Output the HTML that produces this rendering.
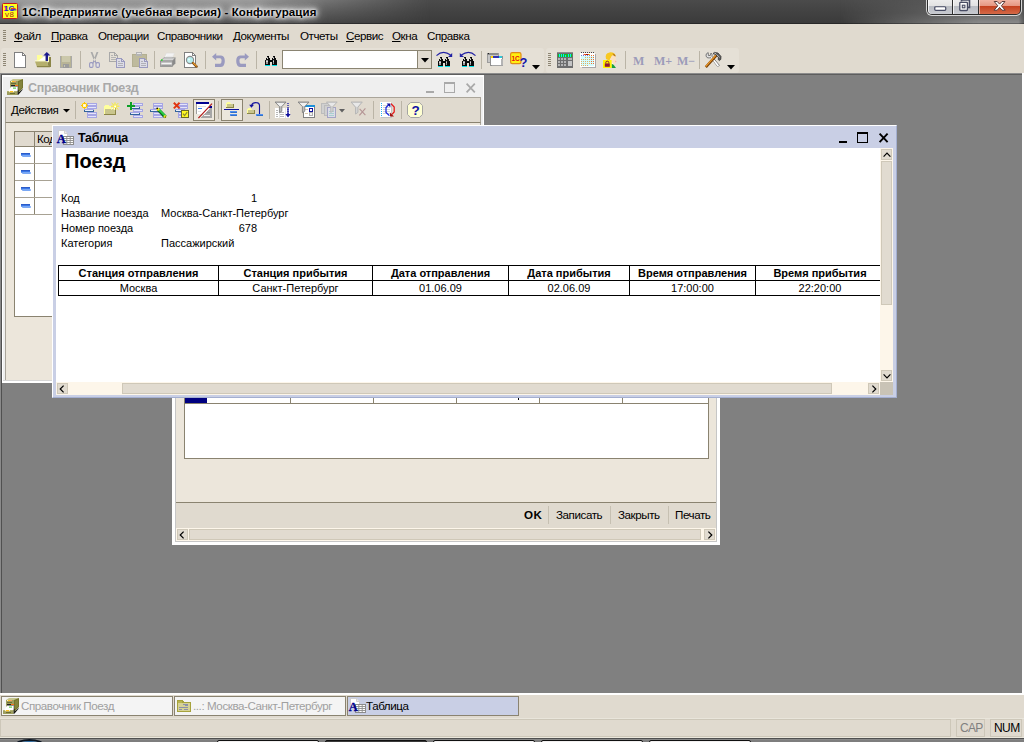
<!DOCTYPE html>
<html lang="ru">
<head>
<meta charset="utf-8">
<title>1С:Предприятие (учебная версия) - Конфигурация</title>
<style>
*{box-sizing:border-box;margin:0;padding:0}
html,body{width:1024px;height:742px;overflow:hidden;background:#808080}
body{position:relative;font-family:"Liberation Sans",sans-serif;font-size:11px;color:#000;line-height:13px}
.a{position:absolute}
.t{position:absolute;white-space:nowrap;font-family:"Liberation Sans",sans-serif;font-size:11px;line-height:13px}
.b{font-weight:bold}
.u{font-size:11.6px;letter-spacing:-.42px}
svg{position:absolute;overflow:visible}
.sep{position:absolute;width:1px;background:#bab4a6}
.grip{position:absolute;width:3px;height:14px;background:repeating-linear-gradient(to bottom,#8d8573 0,#8d8573 1px,transparent 1px,transparent 2px)}
/* title bar */
#titlebar{left:0;top:0;width:1024px;height:24px;background:linear-gradient(to bottom,#4b4b4b 0,#424242 50%,#3a3a3a 100%)}
#tbl{left:0;top:0;width:430px;height:24px;background:linear-gradient(to bottom,#9c9c9c 0,#7c7c7c 40%,#5e5e5e 80%,#4c4c4c 100%);-webkit-mask-image:linear-gradient(to right,#000 0,#000 58%,rgba(0,0,0,.5) 76%,transparent 100%);mask-image:linear-gradient(to right,#000 0,#000 58%,rgba(0,0,0,.5) 76%,transparent 100%)}
#tbr{left:840px;top:0;width:184px;height:24px;background:linear-gradient(to bottom,#5c5c5c 0,#6a6a6a 55%,#8c8c8c 100%);-webkit-mask-image:linear-gradient(to right,transparent 0,rgba(0,0,0,.6) 45%,#000 75%,#000 97%,rgba(0,0,0,.4) 100%);mask-image:linear-gradient(to right,transparent 0,rgba(0,0,0,.6) 45%,#000 75%,#000 97%,rgba(0,0,0,.4) 100%)}
#titletext{left:22px;top:5px;font-weight:bold;font-size:11.5px;line-height:14px;letter-spacing:.12px;text-shadow:0 0 3px #fff,0 0 5px #fff,0 0 7px rgba(255,255,255,.9),0 0 10px rgba(255,255,255,.8),0 0 14px rgba(255,255,255,.5)}
#menubar{left:0;top:24px;width:1024px;height:24px;background:#e0dacf}
#toolbar{left:0;top:48px;width:1024px;height:25px;background:#e0dacf}
.tbband{position:absolute;top:48px;height:25px;background:#e5e0d6;border-radius:3px}
.mi{top:29px}
/* windows */
.win{position:absolute;background:#ece6db}
.sbtrack{position:absolute;background:#fdf6ea}
.sbbtn{position:absolute;width:11px;height:11px;background:#e1dbd0;border:1px solid #cfc8b8}
.sbthumb{position:absolute;background:#e1dbd0;border:1px solid #cfc8b8}
</style>
</head>
<body>
<div class="a" style="left:0;top:74px;width:1024px;height:620px;background:#808080"></div>
<!-- title bar -->
<div id="titlebar" class="a"></div>
<div id="tbl" class="a"></div>
<div id="tbr" class="a"></div>
<div class="a" style="left:0;top:23px;width:1024px;height:1px;background:rgba(0,0,0,.3)"></div>
<svg style="left:2px;top:3px" width="16" height="16" viewBox="0 0 16 16">
 <rect x="0.5" y="0.5" width="15" height="15" rx="1" fill="#ffff1c" stroke="#c4181c"/>
 <text x="1.6" y="8" font-family="'Liberation Sans',sans-serif" font-weight="bold" font-size="7.5" fill="#f01010">1</text>
 <text x="2.2" y="8" font-family="'Liberation Sans',sans-serif" font-weight="bold" font-size="7.5" fill="#1c1ce8">1</text>
 <text x="6.4" y="8" font-family="'Liberation Sans',sans-serif" font-weight="bold" font-size="8" fill="#1c1ce8">C</text>
 <rect x="9" y="5.2" width="4.6" height="1.1" fill="#f01010"/>
 <rect x="9" y="6.3" width="5.4" height="1.1" fill="#1c1ce8"/>
 <text x="3" y="14.4" font-family="'Liberation Sans',sans-serif" font-size="8" fill="#b01c1c" letter-spacing=".6">v8</text>
</svg>
<div id="titletext" class="t">1С:Предприятие (учебная версия) - Конфигурация</div>
<!-- caption buttons -->
<div class="a" style="left:926px;top:-3px;width:96px;height:19px;border:1px solid rgba(255,255,255,.8);border-radius:0 0 6px 6px;background:#2d2d2d"></div>
<div class="a" style="left:928px;top:0;width:24px;height:14px;border-radius:0 0 0 4px;background:linear-gradient(to bottom,#ececec 0,#e2e2e2 43%,#b9bcc2 44%,#c8cad0 100%);box-shadow:inset 1px 0 0 rgba(255,255,255,.7)"></div>
<div class="a" style="left:953px;top:0;width:25px;height:14px;background:linear-gradient(to bottom,#ececec 0,#e2e2e2 43%,#b9bcc2 44%,#c8cad0 100%);box-shadow:inset 1px 0 0 rgba(255,255,255,.7)"></div>
<div class="a" style="left:979px;top:0;width:41px;height:14px;border-radius:0 0 4px 0;background:linear-gradient(to bottom,#f0b4a4 0,#e59682 43%,#c4401f 44%,#d46a48 100%);box-shadow:inset 1px 0 0 rgba(255,255,255,.5)"></div>
<svg style="left:934px;top:6px" width="13" height="6" viewBox="0 0 13 6"><rect x="0.75" y="0.75" width="11" height="3.6" rx="1" fill="#fff" stroke="#474b63" stroke-width="1.2"/></svg>
<svg style="left:958px;top:0" width="14" height="12" viewBox="0 0 14 12">
 <path d="M3.5 1.5 V0 H11.5 V7.5 H9.5" fill="none" stroke="#474b63" stroke-width="1.6"/>
 <rect x="1.8" y="2.3" width="7.6" height="8.2" rx="0.8" fill="#fff" stroke="#474b63" stroke-width="1.3"/>
 <rect x="4.3" y="5.2" width="2.6" height="2.6" fill="#e0e0e0" stroke="#474b63" stroke-width="1.1"/>
</svg>
<svg style="left:993px;top:0" width="14" height="12" viewBox="0 0 14 12">
 <path d="M1.2 1.5 L4.2 1.5 L6.6 4.1 L9 1.5 L12 1.5 L8.4 5.8 L12.2 10.2 L9 10.2 L6.6 7.4 L4.2 10.2 L1 10.2 L4.8 5.8 Z" fill="#fff" stroke="#5a3a3a" stroke-width="1" stroke-linejoin="round"/>
</svg>
<!-- menu bar -->
<div id="menubar" class="a"></div>
<div class="grip" style="left:3px;top:30px;height:12px"></div>
<div class="t mi u" style="left:14px"><u>Ф</u>айл</div>
<div class="t mi u" style="left:51px"><u>П</u>равка</div>
<div class="t mi u" style="left:98px">Операции</div>
<div class="t mi u" style="left:157px">Справочники</div>
<div class="t mi u" style="left:233px">Документы</div>
<div class="t mi u" style="left:300px">Отчеты</div>
<div class="t mi u" style="left:346px"><u>С</u>ервис</div>
<div class="t mi u" style="left:392px"><u>О</u>кна</div>
<div class="t mi u" style="left:427px">Сп<u>р</u>авка</div>
<!-- toolbar -->
<div id="toolbar" class="a"></div>
<div class="tbband" style="left:1px;width:543px"></div>
<div class="tbband" style="left:546px;width:193px"></div>
<div class="a" style="left:0;top:73px;width:1024px;height:1px;background:#8c8c8c"></div>
<div class="a" style="left:0;top:74px;width:1024px;height:1px;background:#5e5e5e"></div>
<div class="grip" style="left:3px;top:53px"></div>
<div class="grip" style="left:548px;top:53px"></div>
<div class="sep" style="left:80px;top:51px;height:18px"></div>
<div class="sep" style="left:154px;top:51px;height:18px"></div>
<div class="sep" style="left:205px;top:51px;height:18px"></div>
<div class="sep" style="left:256px;top:51px;height:18px"></div>
<div class="sep" style="left:481px;top:51px;height:18px"></div>
<div class="sep" style="left:625px;top:51px;height:18px"></div>
<div class="sep" style="left:699px;top:51px;height:18px"></div>
<!-- combo -->
<div class="a" style="left:282px;top:50px;width:150px;height:19px;background:#fff;border:1px solid #8a8472"></div>
<div class="a" style="left:417px;top:51px;width:14px;height:17px;background:#e1dbd0;border-left:1px solid #8a8472"></div>
<svg style="left:421px;top:58px" width="8" height="5" viewBox="0 0 8 5"><path d="M0 0H8L4 4.5Z" fill="#000"/></svg>
<svg style="left:532px;top:65px" width="8" height="5" viewBox="0 0 8 5"><path d="M0 0H8L4 4.5Z" fill="#000"/></svg>
<svg style="left:727px;top:65px" width="8" height="5" viewBox="0 0 8 5"><path d="M0 0H8L4 4.5Z" fill="#000"/></svg>
<!-- M buttons -->
<div class="t b" style="left:633px;top:54px;font-family:'Liberation Serif',serif;font-size:12px;line-height:14px;color:#9b9bb9">M</div>
<div class="t b" style="left:654px;top:54px;font-family:'Liberation Serif',serif;font-size:12px;line-height:14px;color:#9b9bb9">M+</div>
<div class="t b" style="left:677px;top:54px;font-family:'Liberation Serif',serif;font-size:12px;line-height:14px;color:#9b9bb9">M−</div>
<!-- main toolbar icons -->
<svg style="left:14px;top:52px" width="12" height="16" viewBox="0 0 12 16" shape-rendering="crispEdges">
 <path d="M0.5 0.5H8.5L11.5 3.5V15.5H0.5Z" fill="#fff" stroke="#808080"/>
 <path d="M8.5 0.5V3.5H11.5" fill="none" stroke="#808080"/>
</svg>
<svg style="left:35px;top:52px" width="16" height="16" viewBox="0 0 16 16">
 <path d="M2 3H6.6L7.6 4.4V9H2Z" fill="#ffff99"/>
 <path d="M3 9L9 4.4L10.6 5.4V9Z" fill="#fff"/>
 <path d="M13 5H14.4V12H13Z" fill="#ffffc0"/>
 <path d="M0 8.4H11.6V9.6H0Z" fill="#ffffc8"/>
 <path d="M0 9.4H12L13.6 15H2Z" fill="#b5af6c"/>
 <path d="M14 5H16V15H13.6L12.4 10.6L14 10Z" fill="#8b8547"/>
 <path d="M1.8 14H15V15.2H2.2Z" fill="#8b8547"/>
 <path d="M10.6 3H13V9H10.6Z" fill="#1a1a8c"/>
 <path d="M8.4 3.6L11.8 0L15.4 3.6Z" fill="#1a1a8c"/>
</svg>
<svg style="left:60px;top:56px" width="12" height="12" viewBox="0 0 12 12" shape-rendering="crispEdges">
 <rect x="0" y="0" width="12" height="12" fill="#a9a9a9"/>
 <rect x="1" y="0" width="10" height="11" fill="#b8b496"/>
 <rect x="2" y="0" width="8" height="6" fill="#cbc8ab"/>
 <rect x="3" y="8" width="6" height="4" fill="#9c9c9c"/>
 <rect x="4" y="9" width="1" height="2" fill="#c8c5b0"/>
</svg>
<svg style="left:89px;top:52px" width="11" height="16" viewBox="0 0 11 16">
 <path d="M1.6 0L3.4 0L7 9.6L5.6 10.2Z M9.4 0L7.6 0L4 9.6L5.4 10.2Z" fill="#a9a9a9"/>
 <rect x="0.6" y="10.6" width="3.4" height="4.8" rx="1.2" fill="#e4e1e2" stroke="#9a9abf" stroke-width="1.1"/>
 <rect x="7" y="10.6" width="3.4" height="4.8" rx="1.2" fill="#e4e1e2" stroke="#9a9abf" stroke-width="1.1"/>
 <path d="M3.8 11.4L5 8.8M7.2 11.4L6 8.8" stroke="#9a9abf" stroke-width="1.1"/>
</svg>
<svg style="left:109px;top:52px" width="16" height="16" viewBox="0 0 16 16" shape-rendering="crispEdges">
 <path d="M0.5 0.5H5.5L8.5 3.5V9.5H0.5Z" fill="#e5e0d6" stroke="#a9a9a9"/>
 <path d="M5.5 0.5V3.5H8.5" fill="none" stroke="#a9a9a9"/>
 <path d="M2 3.5H4M2 5.5H7M2 7.5H7" stroke="#b4b4b4"/>
 <path d="M7.5 6.5H12.5L15.5 9.5V15.5H7.5Z" fill="#dcdce6" stroke="#9a9abf"/>
 <path d="M12.5 6.5V9.5H15.5" fill="none" stroke="#9a9abf"/>
 <path d="M9 9.5H11M9 11.5H14M9 13.5H14" stroke="#b0b0b8"/>
</svg>
<svg style="left:132px;top:52px" width="16" height="16" viewBox="0 0 16 16" shape-rendering="crispEdges">
 <rect x="0" y="2" width="14" height="12" rx="1" fill="#beba9d"/>
 <rect x="0" y="2" width="14" height="12" fill="none" stroke="#b3af92" stroke-width="1"/>
 <rect x="4" y="0" width="6" height="4" fill="#b4b4b4"/>
 <rect x="5" y="1" width="4" height="1" fill="#e6e6e6"/>
 <path d="M7.5 6.5H12.5L15.5 9.5V15.5H7.5Z" fill="#dcdce6" stroke="#9a9abf"/>
 <path d="M12.5 6.5V9.5H15.5" fill="none" stroke="#9a9abf"/>
 <path d="M9 9.5H11M9 11.5H14M9 13.5H14" stroke="#b0b0b8"/>
</svg>
<svg style="left:160px;top:52px" width="16" height="16" viewBox="0 0 16 16">
 <path d="M4 6.4L6.4 1.2H14.4L12 6.4Z" fill="#fff" stroke="#dadada" stroke-width=".6"/>
 <path d="M6.4 3H13.2M5.6 4.6H12.4" stroke="#e0e0e0" stroke-width=".8"/>
 <path d="M0.6 9L3.8 5.8H15.4L12.4 9Z" fill="#d4d4d4" stroke="#8c8c8c" stroke-width=".7"/>
 <path d="M12.4 9L15.4 5.8V11.4L12.4 14.6Z" fill="#8a8a8a"/>
 <rect x="0.6" y="9" width="11.8" height="5.6" fill="#b8b8b8" stroke="#868686" stroke-width=".7"/>
 <rect x="1.4" y="10.8" width="10.2" height="1.6" fill="#f2f2f2"/>
 <rect x="1.4" y="12.8" width="10.2" height="1.2" fill="#9a9a9a"/>
 <rect x="1" y="7.4" width="1.6" height="1.4" fill="#20d820"/>
</svg>
<svg style="left:184px;top:52px" width="14" height="16" viewBox="0 0 14 16">
 <path d="M0.5 0.5H8.5L11.5 3.5V15.5H0.5Z" fill="#fff" stroke="#808080" shape-rendering="crispEdges"/>
 <path d="M8.5 0.5V3.5H11.5" fill="none" stroke="#808080" shape-rendering="crispEdges"/>
 <circle cx="6" cy="8" r="3.6" fill="#b4ecec" stroke="#8c8c8c" stroke-width="1.1"/>
 <path d="M5 6.2V9.8M4 7.4H6.2" stroke="#e8ffff" stroke-width=".9"/>
 <path d="M9 11L12.6 14.6" stroke="#7a4a10" stroke-width="2.4" stroke-linecap="round"/>
 <path d="M9.2 10.8L12.4 14" stroke="#e89a30" stroke-width="1.1" stroke-linecap="round"/>
</svg>
<svg style="left:212px;top:53px" width="13" height="14" viewBox="0 0 13 14">
 <path d="M4.2 0L0 3.8L4.2 7.6V5.2H8.2Q9.6 5.4 9.6 7.6Q9.6 10.4 8.2 10.8H3V14H9Q12.8 13.6 12.8 8Q12.8 2.6 9 2.4H4.2Z" fill="#9a9abf"/>
</svg>
<svg style="left:236px;top:53px" width="13" height="14" viewBox="0 0 13 14">
 <path d="M8.8 0L13 3.8L8.8 7.6V5.2H4.8Q3.4 5.4 3.4 7.6Q3.4 10.4 4.8 10.8H10V14H4Q0.2 13.6 0.2 8Q0.2 2.6 4 2.4H8.8Z" fill="#9a9abf"/>
</svg>
<svg width="0" height="0" style="left:0;top:0"><defs>
 <g id="bino">
  <path d="M2 0H4.2V2H5V4H7V2H7.8V0H10V2H11V4H12V10H7.4V6H4.6V10H0V4H1V2H2Z" fill="#0a0a0a"/>
  <path d="M2 1H3V3H2ZM1 4H3V8H1ZM7.8 1H8.8V3H7.8ZM7.6 4H9.2V8H7.6Z" fill="#9a9a9a"/>
  <path d="M2 2H3V3H2ZM8 2H9V3H8ZM1.4 5H2.6V6H1.4ZM8 5H9V6H8Z" fill="#d8d8d8"/>
  <path d="M0 9H4.6V10H0ZM7.4 9H12V10H7.4Z" fill="#00e0e8"/>
 </g></defs></svg>
<svg style="left:265px;top:56px" width="12" height="10" viewBox="0 0 12 10" shape-rendering="crispEdges"><use href="#bino"/></svg>
<svg style="left:438px;top:57px" width="12" height="10" viewBox="0 0 12 10" shape-rendering="crispEdges"><use href="#bino"/></svg>
<svg style="left:462px;top:57px" width="12" height="10" viewBox="0 0 12 10" shape-rendering="crispEdges"><use href="#bino"/></svg>
<svg style="left:436px;top:51px" width="17" height="7" viewBox="0 0 17 7"><path d="M0.5 4.6Q7 -1.6 14.6 4" fill="none" stroke="#2222a4" stroke-width="1.2"/><path d="M16.2 2V6H12Z" fill="#2222a4"/></svg>
<svg style="left:459px;top:51px" width="17" height="7" viewBox="0 0 17 7"><path d="M16.5 4.6Q10 -1.6 2.4 4" fill="none" stroke="#2222a4" stroke-width="1.2"/><path d="M0.8 2V6H5Z" fill="#2222a4"/></svg>
<svg style="left:487px;top:53px" width="17" height="14" viewBox="0 0 17 14" shape-rendering="crispEdges">
 <rect x="0" y="0" width="11" height="9" fill="#c6c6c6" stroke="#9c9c9c"/>
 <rect x="0" y="0" width="11" height="2" fill="#8c8c8c"/>
 <rect x="1" y="0" width="1" height="1" fill="#222"/>
 <rect x="3.5" y="3.5" width="12" height="9" fill="#fff" stroke="#909090"/>
 <rect x="4" y="3" width="11" height="2" fill="#3434b4"/>
 <rect x="4" y="3" width="2" height="2" fill="#ffd800"/>
 <rect x="12" y="3" width="3" height="2" fill="#30c8d8"/>
 <rect x="14" y="6" width="2" height="7" fill="#b4b4b4"/>
 <rect x="5" y="12" width="11" height="1" fill="#a4a4a4"/>
</svg>
<svg style="left:510px;top:52px" width="17" height="16" viewBox="0 0 17 16">
 <rect x="0.6" y="0.6" width="10.4" height="11" rx="1.6" fill="#fff010" stroke="#e08a18" stroke-width="1.2"/>
 <text x="1.6" y="8.6" font-family="Liberation Sans,sans-serif" font-weight="bold" font-size="6.5" fill="#e81010" letter-spacing="-.3">1C</text>
 <text x="9.6" y="14.8" font-family="Liberation Sans,sans-serif" font-weight="bold" font-size="13" fill="#1414a8">?</text>
</svg>
<svg style="left:557px;top:52px" width="16" height="16" viewBox="0 0 16 16" shape-rendering="crispEdges">
 <rect x="0" y="0" width="16" height="16" fill="#6e6e6e"/>
 <rect x="0" y="0" width="16" height="1" fill="#8e8e8e"/>
 <rect x="1" y="2" width="14" height="3" fill="#10c020"/>
 <path d="M2 2V5M4 2V5M6 2V5M8 3V5M11 2V5M13 2V5" stroke="#10e8f0"/>
 <path d="M1 6H3V8H1ZM4 6H6V8H4ZM7 6H9V8H7ZM1 9H3V11H1ZM4 9H6V11H4ZM7 9H9V11H7ZM1 12H3V14H1ZM4 12H6V14H4ZM7 12H9V14H7Z" fill="#b4b4b4"/>
 <rect x="11" y="6" width="4" height="2" fill="#b4b4b4"/>
 <rect x="11" y="9" width="4" height="5" fill="#c4c4c4"/>
</svg>
<svg style="left:580px;top:52px" width="16" height="16" viewBox="0 0 16 16" shape-rendering="crispEdges">
 <rect x="2" y="2" width="14" height="14" fill="#a8a8a8"/>
 <rect x="0" y="1" width="15" height="14" fill="#fff"/>
 <rect x="1" y="4" width="13" height="10" fill="#d4fcfc"/>
 <path d="M1 0H2V1H1ZM3 0H4V1H3ZM5 0H6V1H5ZM7 0H8V1H7ZM9 0H10V1H9ZM11 0H12V1H11ZM13 0H14V1H13Z" fill="#444"/>
 <rect x="4" y="2" width="6" height="1" fill="#f06010"/>
 <rect x="6" y="2" width="2" height="1" fill="#a01010"/>
 <rect x="3" y="2" width="1" height="1" fill="#f090d0"/>
 <rect x="9" y="2" width="1" height="1" fill="#f0d020"/>
 <path d="M1 3H2V4H1ZM3 3H4V4H3ZM5 3H6V4H5ZM7 3H8V4H7ZM9 3H10V4H9Z" fill="#7080d0"/>
 <path d="M5 5H6V6H5ZM7 5H8V6H7ZM9 5H10V6H9ZM1 7H2V8H1ZM3 7H4V8H3ZM5 7H6V8H5ZM7 7H8V8H7ZM9 7H10V8H9ZM1 9H2V10H1ZM3 9H4V10H3ZM5 9H6V10H5ZM7 9H8V10H7ZM9 9H10V10H9ZM1 11H2V12H1ZM3 11H4V12H3ZM5 11H6V12H5ZM7 11H8V12H7ZM9 11H10V12H9ZM1 13H2V14H1ZM3 13H4V14H3ZM5 13H6V14H5ZM7 13H8V14H7Z" fill="#e0b060"/>
 <path d="M11 3H12V4H11ZM13 3H14V4H13ZM11 5H12V6H11ZM13 5H14V6H13ZM11 7H12V8H11ZM13 7H14V8H13ZM11 9H12V10H11ZM13 9H14V10H13ZM11 11H12V12H11ZM13 11H14V12H13Z" fill="#f07030"/>
</svg>
<svg style="left:603px;top:52px" width="14" height="16" viewBox="0 0 14 16">
 <path d="M3 7Q1.5 1 6.5 0.4Q12 0 12.6 4L9 4L6.4 8.4Z" fill="#f8c820"/>
 <path d="M6.4 8.4L9 3.6Q11 2.6 12.6 4.2L13 8L13.4 9.4L12.6 10L12.4 12L9 12.4Z" fill="#fbe0c0"/>
 <path d="M9.4 1.4Q12 1.4 12.8 4.4L11 4Z" fill="#b87820"/>
 <path d="M12 8.6L13.6 9.4L12.6 10.4Z" fill="#f0a0a0"/>
 <path d="M8.6 11.4L10.4 12.6L13 16H8.6Z" fill="#18a040"/>
 <path d="M8.6 11.4L9.8 10.4L10.6 12.8Z" fill="#f4f4f4"/>
 <rect x="0" y="8" width="8.6" height="8" fill="#fff400"/>
 <path d="M2.8 11.4V10.4Q2.8 9.2 4.3 9.2Q5.8 9.2 5.8 10.4V11.4" fill="none" stroke="#901838" stroke-width="1"/>
 <rect x="1.8" y="11.4" width="5" height="3.4" fill="#901838"/>
</svg>
<svg style="left:705px;top:52px" width="17" height="16" viewBox="0 0 17 16">
 <path d="M3.2 0.6Q0.6 1.4 1 4Q1.6 6.2 4.2 6L5.4 5.4L12.6 14.4L14.4 13.4L7 4.4Q7.6 2.4 6 1L5.4 3.4L3.4 3.6Z" fill="#e4e4e4" stroke="#6c6c6c" stroke-width=".9"/>
 <path d="M6.4 5.6L13.4 14" stroke="#fff" stroke-width="1.4"/>
 <path d="M0.8 15.2L11.6 3.2" stroke="#7a4208" stroke-width="2.6"/>
 <path d="M0.6 14.6L11.2 2.8" stroke="#f09a28" stroke-width="1.2"/>
 <path d="M8 1.6L9.4 0.4L13 1L16 4.4L15.8 7.4L14.4 8.6L13.2 7.6L13.4 5.6L10.6 2.6Z" fill="#5c5c5c" stroke="#2c2c2c" stroke-width=".7"/>
 <path d="M11.4 2.4L14.6 5.4M9.4 1.2L11 1.6" stroke="#c8c8c8" stroke-width=".9"/>
</svg>
<!-- MDI client sunken edge -->
<div class="a" style="left:0;top:74px;width:2px;height:620px;background:linear-gradient(to right,#8a8a8a 0,#8a8a8a 1px,#505050 1px,#505050 2px)"></div>
<div class="a" style="left:1022px;top:73px;width:2px;height:622px;background:#fff"></div>
<!-- Справочник Поезд window -->
<div class="a" style="left:2px;top:75px;width:482px;height:308px;background:#efefef;border:1px solid #fff;border-top-width:2px;border-bottom-width:2px"></div>
<div class="a" style="left:5px;top:97px;width:476px;height:284px;background:#ece6db;border-left:1px solid #aaa59a;border-right:1px solid #aaa59a"></div>
<div class="a" style="left:3px;top:380px;width:480px;height:1px;background:#d6d6d6"></div>
<div class="a" style="left:5px;top:97px;width:476px;height:26px;background:#e0dacf;border:1px solid #aaa59a;border-bottom-color:#8a8370"></div>
<!-- title -->
<svg width="0" height="0" style="left:0;top:0"><defs><g id="cab">
 <path d="M3 2L6 0H16V2Z" fill="#c6c68e"/>
 <path d="M11 2L16 0V9L11 14Z" fill="#74742e"/>
 <path d="M12 3L15 1.6V8.6L12 11.6Z" fill="#84843c"/>
 <rect x="3" y="2" width="8" height="10" fill="#9e9e5e"/>
 <rect x="4" y="2" width="5" height="1" fill="#fff4c0"/><rect x="5" y="2" width="2" height="1" fill="#ffc020"/><rect x="7" y="2" width="2" height="1" fill="#f8a060"/>
 <rect x="4" y="4" width="5" height="1" fill="#6c6c30"/>
 <rect x="4" y="6" width="7" height="2" fill="#20201c"/>
 <rect x="8" y="6" width="3" height="1" fill="#ff7010"/>
 <path d="M1.4 12L4 7.6H11V12Z" fill="#fff"/>
 <path d="M10 8H11V12H10Z" fill="#c0c0d0"/>
 <rect x="6" y="8.6" width="3" height="1" fill="#40c830"/>
 <path d="M0 12H10.6V16H0Z" fill="#9e9e5e"/>
 <rect x="0" y="12" width="10.6" height=".8" fill="#b8b878"/>
 <rect x="2" y="12" width="5" height="1.2" fill="#fff4c0"/><rect x="3" y="12" width="3" height="1.2" fill="#ffc020"/>
 <rect x="3" y="14" width="5" height="1" fill="#6c6c30"/>
 <path d="M10.6 12L11.6 10.6V13.6L15.6 10V10.8L11.6 15.4L10.6 16Z" fill="#141410"/>
</g></defs></svg>
<svg style="left:7px;top:79px" width="16" height="16" viewBox="0 0 16 16"><use href="#cab"/></svg>
<div class="t b" style="left:28px;top:81px;color:#a9a9a9;font-size:12.5px;line-height:14px;letter-spacing:-.35px">Справочник Поезд</div>
<svg style="left:426px;top:82px" width="50" height="12" viewBox="0 0 50 12">
 <rect x="0" y="9" width="8" height="2" fill="#a9a9a9"/>
 <rect x="18.5" y="0.5" width="10" height="10" fill="none" stroke="#a9a9a9"/>
 <rect x="18" y="0" width="11" height="2" fill="#a9a9a9"/>
 <path d="M40.6 1.6L48.8 10.4M48.8 1.6L40.6 10.4" stroke="#a9a9a9" stroke-width="1.7"/>
</svg>
<!-- toolbar -->
<div class="t u" style="left:11px;top:103px">Действия</div>
<svg style="left:63px;top:109px" width="7" height="4" viewBox="0 0 7 4"><path d="M0 0H7L3.5 3.6Z" fill="#000"/></svg>
<div class="sep" style="left:75px;top:101px;height:18px"></div>
<div class="sep" style="left:218px;top:101px;height:18px"></div>
<div class="sep" style="left:269px;top:101px;height:18px"></div>
<div class="sep" style="left:373px;top:101px;height:18px"></div>
<div class="sep" style="left:401px;top:101px;height:18px"></div>
<div class="a" style="left:193px;top:99px;width:22px;height:22px;background:#ece7dd;border:1px solid #8a8370"></div>
<div class="a" style="left:221px;top:99px;width:22px;height:22px;background:#ece7dd;border:1px solid #8a8370"></div>
<!-- grid -->
<div class="a" style="left:14px;top:131px;width:462px;height:186px;background:#fff;border:1px solid #8a8370"></div>
<div class="a" style="left:15px;top:132px;width:460px;height:15px;background:#e0dacf;border-bottom:1px solid #8a8370"></div>
<div class="a" style="left:34px;top:132px;width:1px;height:82px;background:#8a8370"></div>
<div class="a" style="left:15px;top:163px;width:460px;height:1px;background:#a8a294"></div>
<div class="a" style="left:15px;top:180px;width:460px;height:1px;background:#a8a294"></div>
<div class="a" style="left:15px;top:197px;width:460px;height:1px;background:#a8a294"></div>
<div class="a" style="left:15px;top:214px;width:460px;height:1px;background:#a8a294"></div>
<div class="t u" style="left:37px;top:132px">Код</div>
<svg style="left:21px;top:153px" width="10" height="56" viewBox="0 0 10 56">
 <g id="mn"><rect x="0" y="0" width="9" height="3" rx="1" fill="#3c78e8"/><rect x="1" y="2" width="9" height="2" rx="1" fill="#7aa8f4"/><rect x="0" y="0" width="9" height="1" fill="#2c5cc8"/></g>
 <use href="#mn" y="17"/><use href="#mn" y="34"/><use href="#mn" y="51"/>
</svg>
<!-- Справочник toolbar icons -->
<svg width="0" height="0" style="left:0;top:0"><defs>
 <g id="lbar"><rect x="0" y="0" width="10" height="3" fill="#a6a6e4"/><rect x="1" y="1" width="8" height="1" fill="#e4e4fa"/></g>
 <g id="bbar"><rect x="0" y="0" width="10" height="3" fill="#34649c"/><rect x="1" y="1" width="8" height="1" fill="#e8eefa"/><rect x="0" y="0" width="10" height="1" fill="#a6a6e4"/></g>
 <g id="fold"><path d="M0 1H1V0H4V1H5V2H9V8H0Z" fill="#c9c58d"/><path d="M0 1H1V0H4V1H5V2H9V3H1V8H0Z" fill="#ffff9c"/><path d="M0 8H9V2H8V7H0Z" fill="#8b8547"/></g>
 <g id="funnel"><path d="M0 0H12L7.4 5V10L4.8 11.6V5Z" fill="#bdbdbd"/><path d="M1.6 1H10.4L7 4.6H5Z" fill="#f0f0f0"/><path d="M0 0H12L7.4 5V10L4.8 11.6V5Z" fill="none" stroke="#7e7e7e" stroke-width=".9"/></g>
 <g id="funneld"><path d="M0 0H12L7.4 5V10L4.8 11.6V5Z" fill="#d2d2d2"/><path d="M1.6 1H10.4L7 4.6H5Z" fill="#e8e8e8"/><path d="M0 0H12L7.4 5V10L4.8 11.6V5Z" fill="none" stroke="#b4b4b4" stroke-width=".9"/></g>
</defs></svg>
<svg style="left:81px;top:102px" width="17" height="16" viewBox="0 0 17 16" shape-rendering="crispEdges">
 <use href="#lbar" x="6" y="1"/><use href="#lbar" x="6" y="4"/><use href="#bbar" x="3" y="7"/><use href="#lbar" x="6" y="10"/><use href="#lbar" x="6" y="13"/>
 <path d="M3 0H4V1H5V2H6V3H7V4H6V5H5V6H4V7H3V6H2V5H1V4H0V3H1V2H2V1H3Z" fill="#ffc400"/>
 <path d="M1 1H2V2H1ZM5 1H6V2H5ZM1 5H2V6H1ZM5 5H6V6H5Z" fill="#ffe050"/>
 <rect x="2" y="2" width="3" height="3" fill="#fff8c0"/><rect x="3" y="3" width="1" height="1" fill="#fff"/>
</svg>
<svg style="left:104px;top:102px" width="16" height="14" viewBox="0 0 16 14">
 <g transform="translate(0,3) scale(1.34,1.3)" shape-rendering="crispEdges"><use href="#fold"/></g>
 <path d="M11 0.4V8M7.6 1L14.4 7.6M7 4.2H15.4M14.2 1.2L8 7.4" stroke="#fff020" stroke-width="1"/>
 <path d="M10.2 3.4H12V5.2H10.2Z" fill="#fff"/>
 <path d="M9 5.6L7.6 7.6M10.6 6L10.2 8" stroke="#fff" stroke-width=".9"/>
</svg>
<svg style="left:127px;top:102px" width="17" height="16" viewBox="0 0 17 16" shape-rendering="crispEdges">
 <use href="#lbar" x="6" y="1"/><use href="#bbar" x="3" y="4"/><use href="#lbar" x="6" y="7"/><use href="#bbar" x="3" y="10"/><use href="#lbar" x="6" y="13"/>
 <path d="M3 0H5V3H8V5H5V8H3V5H0V3H3Z" fill="#0ca028"/>
</svg>
<svg style="left:150px;top:102px" width="17" height="16" viewBox="0 0 17 16">
 <g shape-rendering="crispEdges"><use href="#lbar" x="3" y="1"/><use href="#lbar" x="3" y="4"/><use href="#bbar" x="0" y="7"/><use href="#lbar" x="3" y="10"/><use href="#lbar" x="3" y="13"/></g>
 <path d="M8 7.4L15.4 15" stroke="#0a6a18" stroke-width="3.4"/>
 <path d="M8.4 7L15.6 14.4" stroke="#28d048" stroke-width="1.8"/>
 <circle cx="8" cy="7.2" r="1.5" fill="#f8e820"/><circle cx="7.2" cy="6.4" r=".8" fill="#000"/>
 <circle cx="15" cy="14.6" r="1.4" fill="#f8e820"/><circle cx="15.4" cy="15" r=".6" fill="#000"/>
</svg>
<svg style="left:173px;top:102px" width="17" height="16" viewBox="0 0 17 16">
 <g shape-rendering="crispEdges"><use href="#lbar" x="5" y="1"/><use href="#lbar" x="5" y="4"/><use href="#bbar" x="2" y="7"/><use href="#lbar" x="5" y="10"/><use href="#lbar" x="5" y="13"/>
 <rect x="8.5" y="8.5" width="7" height="7" fill="#fff820" stroke="#6c6824"/></g>
 <path d="M0.8 0.8L6.6 6.4M6.6 0.8L0.8 6.4" stroke="#e03410" stroke-width="2"/>
 <path d="M10 11.6L11.6 13.6L14.2 10.2" fill="none" stroke="#8c8830" stroke-width="1.2"/>
</svg>
<svg style="left:196px;top:102px" width="17" height="17" viewBox="0 0 17 17">
 <g shape-rendering="crispEdges">
 <path d="M0 0H13V12H0Z" fill="#fff"/>
 <path d="M0 0H13V2H0Z" fill="#000090"/>
 <path d="M0 2H1V12H0Z" fill="#a0a0a0"/>
 <rect x="2" y="6" width="4" height="1" fill="#3c7cf0"/>
 <rect x="2" y="4" width="8" height="1" fill="#e0e0e0"/><rect x="2" y="9" width="3" height="1" fill="#e0e0e0"/>
 <path d="M16 4V16H4Z" fill="#a6a6a6"/>
 <path d="M14 4H16V6H13Z" fill="#000090"/>
 <rect x="8" y="13" width="6" height="1" fill="#f0f0f0"/><rect x="11" y="10" width="3" height="1" fill="#909090"/>
 </g>
 <path d="M2.4 16.2L16 1.6" stroke="#b01818" stroke-width="1.2"/>
</svg>
<svg style="left:224px;top:102px" width="16" height="15" viewBox="0 0 16 15" shape-rendering="crispEdges">
 <g transform="translate(2,0) scale(.9,.75)"><use href="#fold"/></g>
 <rect x="0" y="7" width="15" height="1" fill="#10109c"/>
 <rect x="6" y="9" width="7" height="2" rx="1" fill="#4e8ef0"/><rect x="7" y="10" width="6" height="1" fill="#3070c8"/>
 <rect x="6" y="12" width="7" height="2" rx="1" fill="#4e8ef0"/><rect x="7" y="13" width="6" height="1" fill="#3070c8"/>
</svg>
<svg style="left:247px;top:102px" width="17" height="15" viewBox="0 0 17 15">
 <g transform="translate(0,6) scale(.9,.75)" shape-rendering="crispEdges"><use href="#fold"/></g>
 <path d="M12.5 12V3.6Q12.4 0.6 9.4 0.6Q5.4 0.4 4.6 3.4" fill="none" stroke="#10109c" stroke-width="1.1"/>
 <path d="M2.2 2.8H7L4.4 5.8Z" fill="#10109c"/>
 <rect x="9" y="12" width="7" height="2" rx="1" fill="#4e8ef0" shape-rendering="crispEdges"/><rect x="10" y="13" width="6" height="1" fill="#3070c8" shape-rendering="crispEdges"/>
</svg>
<svg style="left:275px;top:102px" width="16" height="16" viewBox="0 0 16 16">
 <g shape-rendering="crispEdges"><rect x="0" y="6" width="15" height="10" fill="#fff"/>
 <path d="M1 8H3M1 10H3M1 12H3M1 14H3M5 10H9M5 12H9M5 14H9" stroke="#b8b8b8"/><path d="M4 6V16M10 6V16" stroke="#e4e4e4"/></g>
 <use href="#funnel" transform="scale(.92)"/>
 <path d="M13 1V14" stroke="#10109c" stroke-width="1.2" stroke-dasharray="1 1"/>
 <path d="M13 6V14" stroke="#10109c" stroke-width="1.2"/>
 <path d="M10.4 12H15.6L13 15.6Z" fill="#10109c"/>
</svg>
<svg style="left:298px;top:102px" width="17" height="16" viewBox="0 0 17 16">
 <g shape-rendering="crispEdges"><rect x="5.5" y="3.5" width="11" height="12" fill="#fff" stroke="#808080"/>
 <rect x="6" y="3" width="11" height="2" fill="#1c90d8"/>
 <rect x="11" y="6" width="4" height="4" fill="#10109c"/><rect x="12" y="7" width="2" height="2" fill="#fff"/>
 <rect x="11.5" y="10.5" width="3" height="3" fill="#f4f4f4" stroke="#b0b0b0"/>
 <path d="M7 7.5H10M7 11.5H10" stroke="#d8c8b0"/></g>
 <use href="#funnel" transform="scale(.92)"/>
</svg>
<svg style="left:321px;top:102px" width="17" height="16" viewBox="0 0 17 16">
 <g shape-rendering="crispEdges"><rect x="0.5" y="1.5" width="7" height="10" fill="#d0d0d0" stroke="#bcbcbc"/><rect x="3.5" y="3.5" width="7" height="10" fill="#d0d0d0" stroke="#bcbcbc"/>
 <rect x="6.5" y="5.5" width="8" height="10" fill="#dcdce6" stroke="#a4a4c4"/>
 <path d="M8 9.5H13M8 11.5H13M8 13.5H13" stroke="#a8d0d0"/></g>
 <use href="#funneld" transform="translate(5.4,0) scale(.9)"/>
</svg>
<svg style="left:339px;top:109px" width="6" height="4" viewBox="0 0 6 4"><path d="M0 0H6L3 3.4Z" fill="#606060"/></svg>
<svg style="left:351px;top:102px" width="16" height="16" viewBox="0 0 16 16">
 <use href="#funneld" transform="scale(.94,1.04)"/>
 <path d="M8.6 6.8L14.4 13.2M14.4 6.4L8.4 13.4" stroke="#b49494" stroke-width="1.1"/>
</svg>
<svg style="left:380px;top:102px" width="16" height="16" viewBox="0 0 16 16">
 <g shape-rendering="crispEdges"><rect x="1" y="1" width="11" height="15" fill="#c4c4c4"/><rect x="0" y="0" width="11" height="15" fill="#fff"/>
 <path d="M1 1.5H2M1 3.5H2M1 5.5H2M1 7.5H2M1 9.5H2M1 11.5H2M1 13.5H2" stroke="#20b0f0"/>
 <path d="M3 3.5H10M3 5.5H10M3 7.5H10M3 9.5H10M3 11.5H10" stroke="#d4d4d4"/></g>
 <path d="M9.4 13.6L6 10.4V5.6L9 2.4" fill="none" stroke="#1020e0" stroke-width="1.2"/>
 <path d="M6.6 1.6H10.4V5.4Z" fill="#10109c"/>
 <path d="M11 1.6L14.2 5V10L12 12.4" fill="none" stroke="#e81010" stroke-width="1.2"/>
 <path d="M10 10.6V14.6H14Z" fill="#a01010"/>
</svg>
<svg style="left:407px;top:102px" width="16" height="16" viewBox="0 0 16 16">
 <path d="M3.6 0.5H12.4L15.5 3.6V12.4L12.4 15.5H3.6L0.5 12.4V3.6Z" fill="#ffffd2" stroke="#a4a4a4"/>
 <text x="4.4" y="13" font-family="Liberation Sans,sans-serif" font-weight="bold" font-size="13.5" fill="#1010a4">?</text>
</svg>
<!-- element form window (behind) -->
<div class="a" style="left:172px;top:390px;width:548px;height:155px;background:#fff"></div>
<div class="a" style="left:175px;top:390px;width:542px;height:152px;background:#ece6db;border:1px solid #c6c6c6;border-top:0"></div>
<!-- tabular part -->
<div class="a" style="left:184px;top:390px;width:525px;height:69px;background:#fff;border:1px solid #8a8370"></div>
<div class="a" style="left:185px;top:403px;width:523px;height:1px;background:#8a8370"></div>
<div class="a" style="left:185px;top:398px;width:22px;height:5px;background:#000080"></div>
<div class="a" style="left:290px;top:398px;width:1px;height:5px;background:#8a8370"></div>
<div class="a" style="left:373px;top:398px;width:1px;height:5px;background:#8a8370"></div>
<div class="a" style="left:456px;top:398px;width:1px;height:5px;background:#8a8370"></div>
<div class="a" style="left:539px;top:398px;width:1px;height:5px;background:#8a8370"></div>
<div class="a" style="left:622px;top:398px;width:1px;height:5px;background:#8a8370"></div>
<div class="a" style="left:518px;top:398px;width:1px;height:2px;background:#000"></div>
<!-- command bar -->
<div class="a" style="left:176px;top:502px;width:540px;height:1px;background:#8a8370"></div>
<div class="a" style="left:176px;top:503px;width:540px;height:25px;background:#e0dacf"></div>
<div class="t b u" style="left:524px;top:508px;letter-spacing:.6px">OK</div>
<div class="t u" style="left:556px;top:508px">Записать</div>
<div class="t u" style="left:618px;top:508px">Закрыть</div>
<div class="t u" style="left:675px;top:508px">Печать</div>
<div class="sep" style="left:548px;top:506px;height:18px;background:#c6c0b2"></div>
<div class="sep" style="left:610px;top:506px;height:18px;background:#c6c0b2"></div>
<div class="sep" style="left:668px;top:506px;height:18px;background:#c6c0b2"></div>
<!-- h scroll -->
<div class="sbtrack" style="left:176px;top:528px;width:540px;height:13px"></div>
<div class="sbbtn" style="left:177px;top:529px"></div>
<div class="sbbtn" style="left:704px;top:529px"></div>
<div class="sbthumb" style="left:189px;top:529px;width:512px;height:11px"></div>
<svg style="left:179px;top:531px" width="6" height="8" viewBox="0 0 6 8"><path d="M4.6 0.6L1.2 4L4.6 7.4" fill="none" stroke="#000" stroke-width="1.2"/></svg>
<svg style="left:707px;top:531px" width="6" height="8" viewBox="0 0 6 8"><path d="M1.4 0.6L4.8 4L1.4 7.4" fill="none" stroke="#000" stroke-width="1.2"/></svg>
<!-- Таблица window -->
<div class="a" style="left:52px;top:125px;width:845px;height:273px;background:#c9cfe5;border-top:1px solid #fff;border-left:1px solid #fff;border-right:1px solid #a4afd0;border-bottom:1px solid #a4afd0"></div>
<div class="a" style="left:56px;top:148px;width:837px;height:247px;background:#fff"></div>
<!-- title -->
<svg style="left:57px;top:130px" width="17" height="15" viewBox="0 0 17 15">
 <path d="M1.5 0.5H7.5L10.5 3.5V8H1.5Z" fill="#fff" stroke="#c8c8c8" stroke-width=".8"/>
 <path d="M7.5 0.5V3.5H10.5" fill="#ececec" stroke="#c8c8c8" stroke-width=".8"/>
 <rect x="6.5" y="6.5" width="10" height="8" fill="#fff" stroke="#8c8c8c" stroke-width="1"/>
 <path d="M6.5 8.5H16.5M6.5 10.5H16.5M6.5 12.5H16.5M9.8 6.5V14.5M13.2 6.5V14.5" stroke="#8c8c8c" stroke-width=".9"/>
 <text x="-0.3" y="13" font-family="Liberation Serif,serif" font-weight="bold" font-size="12.5" fill="#00008c" stroke="#00008c" stroke-width=".3">A</text>
</svg>
<div class="t b" style="left:78px;top:131px;font-size:12.5px;line-height:14px;letter-spacing:-.3px">Таблица</div>
<svg style="left:839px;top:132px" width="50" height="12" viewBox="0 0 50 12">
 <rect x="0" y="9" width="8" height="2" fill="#000"/>
 <rect x="18.5" y="0.5" width="10" height="10" fill="none" stroke="#000"/>
 <rect x="18" y="0" width="11" height="2" fill="#000"/>
 <path d="M40.6 1.6L48.6 10.2M48.6 1.6L40.6 10.2" stroke="#000" stroke-width="1.9"/>
</svg>
<!-- content -->
<div class="t b" style="left:65px;top:149px;font-size:20px;line-height:24px">Поезд</div>
<div class="t" style="left:61px;top:192px">Код</div>
<div class="t" style="left:61px;top:207px">Название поезда</div>
<div class="t" style="left:61px;top:222px">Номер поезда</div>
<div class="t" style="left:61px;top:237px">Категория</div>
<div class="t" style="left:158px;top:192px;width:99px;text-align:right">1</div>
<div class="t" style="left:161px;top:207px">Москва-Санкт-Петербург</div>
<div class="t" style="left:158px;top:222px;width:99px;text-align:right">678</div>
<div class="t" style="left:161px;top:237px">Пассажирский</div>
<!-- table -->
<div class="a" style="left:58px;top:265px;width:822px;height:31px;border:1px solid #000;border-right:0"></div>
<div class="a" style="left:58px;top:280px;width:822px;height:1px;background:#000"></div>
<div class="a" style="left:218px;top:265px;width:1px;height:31px;background:#000"></div>
<div class="a" style="left:372px;top:265px;width:1px;height:31px;background:#000"></div>
<div class="a" style="left:508px;top:265px;width:1px;height:31px;background:#000"></div>
<div class="a" style="left:629px;top:265px;width:1px;height:31px;background:#000"></div>
<div class="a" style="left:755px;top:265px;width:1px;height:31px;background:#000"></div>
<div class="t b" style="left:59px;top:267px;width:159px;text-align:center">Станция отправления</div>
<div class="t b" style="left:219px;top:267px;width:153px;text-align:center">Станция прибытия</div>
<div class="t b" style="left:373px;top:267px;width:135px;text-align:center">Дата отправления</div>
<div class="t b" style="left:509px;top:267px;width:120px;text-align:center">Дата прибытия</div>
<div class="t b" style="left:630px;top:267px;width:125px;text-align:center">Время отправления</div>
<div class="t b" style="left:756px;top:267px;width:128px;text-align:center">Время прибытия</div>
<div class="t" style="left:59px;top:282px;width:159px;text-align:center">Москва</div>
<div class="t" style="left:219px;top:282px;width:153px;text-align:center">Санкт-Петербург</div>
<div class="t" style="left:373px;top:282px;width:135px;text-align:center">01.06.09</div>
<div class="t" style="left:509px;top:282px;width:120px;text-align:center">02.06.09</div>
<div class="t" style="left:630px;top:282px;width:125px;text-align:center">17:00:00</div>
<div class="t" style="left:756px;top:282px;width:128px;text-align:center">22:20:00</div>
<!-- scrollbars -->
<div class="sbtrack" style="left:880px;top:148px;width:13px;height:234px"></div>
<div class="sbtrack" style="left:56px;top:382px;width:824px;height:13px"></div>
<div class="a" style="left:880px;top:382px;width:13px;height:13px;background:#c9c3b6"></div>
<div class="sbbtn" style="left:881px;top:149px"></div>
<div class="sbbtn" style="left:881px;top:370px"></div>
<div class="sbthumb" style="left:881px;top:161px;width:11px;height:144px"></div>
<div class="sbbtn" style="left:57px;top:383px"></div>
<div class="sbbtn" style="left:868px;top:383px"></div>
<div class="sbthumb" style="left:122px;top:383px;width:710px;height:11px"></div>
<svg style="left:883px;top:152px" width="8" height="6" viewBox="0 0 8 6"><path d="M0.6 4.6L4 1.2L7.4 4.6" fill="none" stroke="#000" stroke-width="1.2"/></svg>
<svg style="left:883px;top:373px" width="8" height="6" viewBox="0 0 8 6"><path d="M0.6 1.4L4 4.8L7.4 1.4" fill="none" stroke="#000" stroke-width="1.2"/></svg>
<svg style="left:59px;top:385px" width="6" height="8" viewBox="0 0 6 8"><path d="M4.6 0.6L1.2 4L4.6 7.4" fill="none" stroke="#000" stroke-width="1.2"/></svg>
<svg style="left:871px;top:385px" width="6" height="8" viewBox="0 0 6 8"><path d="M1.4 0.6L4.8 4L1.4 7.4" fill="none" stroke="#000" stroke-width="1.2"/></svg>
<!-- bottom panels -->
<div class="a" style="left:0;top:693px;width:1024px;height:2px;background:#fff"></div>
<div class="a" style="left:0;top:695px;width:1024px;height:43px;background:#e0dacf"></div>
<div class="a" style="left:1px;top:696px;width:172px;height:20px;background:#f4f4f4;border:1px solid #8a8370"></div>
<div class="a" style="left:174px;top:696px;width:172px;height:20px;background:#f4f4f4;border:1px solid #8a8370"></div>
<div class="a" style="left:347px;top:696px;width:172px;height:20px;background:#c9cfe5;border:1px solid #8a8370"></div>
<div class="t u" style="left:21px;top:699px;color:#a0a0a0">Справочник Поезд</div>
<div class="t u" style="left:193px;top:699px;color:#a0a0a0">...: Москва-Санкт-Петербург</div>
<div class="t u" style="left:366px;top:699px">Таблица</div>
<!-- status bar -->
<div class="a" style="left:0;top:718px;width:1024px;height:1px;background:#e9e5db"></div>
<div class="a" style="left:0;top:719px;width:951px;height:18px;border:1px solid #cdc7b9"></div>
<div class="a" style="left:956px;top:719px;width:29px;height:18px;border:1px solid #cdc7b9"></div>
<div class="a" style="left:990px;top:719px;width:32px;height:18px;border:1px solid #cdc7b9"></div>
<div class="t" style="left:960px;top:722px;color:#808080;font-size:12px;letter-spacing:-.7px">CAP</div>
<div class="t" style="left:994px;top:722px;font-size:12px;letter-spacing:-.6px">NUM</div>
<div class="a" style="left:0;top:737px;width:1024px;height:1px;background:#ebe7dc"></div>
<div class="a" style="left:0;top:738px;width:1024px;height:1px;background:#505050"></div>
<div class="a" style="left:0;top:739px;width:1024px;height:3px;background:linear-gradient(to bottom,#8a8a8a 0,#8a8a8a 1px,#7e7e7e 1px,#7e7e7e 3px)"></div>
<div class="a" style="left:15px;top:739px;width:29px;height:12px;border-radius:50%;background:#cfe4f0;border:2px solid #0a1420;box-shadow:inset 0 0 0 1px #2c6ea8"></div>
<div class="a" style="left:217px;top:740px;width:102px;height:4px;background:#f2f0f0;border:1px solid #101010;border-radius:2px 2px 0 0"></div>
<div class="a" style="left:325px;top:740px;width:102px;height:4px;background:#3a3a3a;border:1px solid #101010;border-radius:2px 2px 0 0"></div>
<div class="a" style="left:433px;top:740px;width:102px;height:4px;background:#f2f0f0;border:1px solid #101010;border-radius:2px 2px 0 0"></div>
<div class="a" style="left:541px;top:740px;width:102px;height:4px;background:#f2f0f0;border:1px solid #101010;border-radius:2px 2px 0 0"></div>
<div class="a" style="left:649px;top:740px;width:102px;height:4px;background:#f2f0f0;border:1px solid #101010;border-radius:2px 2px 0 0"></div>
<!-- taskbar icons -->
<svg style="left:3px;top:698px" width="16" height="16" viewBox="0 0 16 16"><use href="#cab"/></svg>
<svg style="left:177px;top:700px" width="14" height="12" viewBox="0 0 14 12" shape-rendering="crispEdges">
 <path d="M0 0H5L7 2H14V12H0Z" fill="#a6a23c"/>
 <rect x="1" y="3" width="12" height="8" fill="#d6d294"/>
 <rect x="1" y="1" width="4" height="2" fill="#b8b450"/>
 <path d="M6 4.5H11M8 5.5H11M2 7.5H11M2 9.5H5M7 9.5H11" stroke="#8c90a8"/>
</svg>
<svg style="left:349px;top:698px" width="17" height="15" viewBox="0 0 17 15">
 <path d="M1.5 0.5H7.5L10.5 3.5V8H1.5Z" fill="#fff" stroke="#c8c8c8" stroke-width=".8"/>
 <path d="M7.5 0.5V3.5H10.5" fill="#ececec" stroke="#c8c8c8" stroke-width=".8"/>
 <rect x="6.5" y="6.5" width="10" height="8" fill="#fff" stroke="#8c8c8c" stroke-width="1"/>
 <path d="M6.5 8.5H16.5M6.5 10.5H16.5M6.5 12.5H16.5M9.8 6.5V14.5M13.2 6.5V14.5" stroke="#8c8c8c" stroke-width=".9"/>
 <text x="-0.3" y="13" font-family="Liberation Serif,serif" font-weight="bold" font-size="12.5" fill="#00008c" stroke="#00008c" stroke-width=".3">A</text>
</svg>
</body>
</html>
